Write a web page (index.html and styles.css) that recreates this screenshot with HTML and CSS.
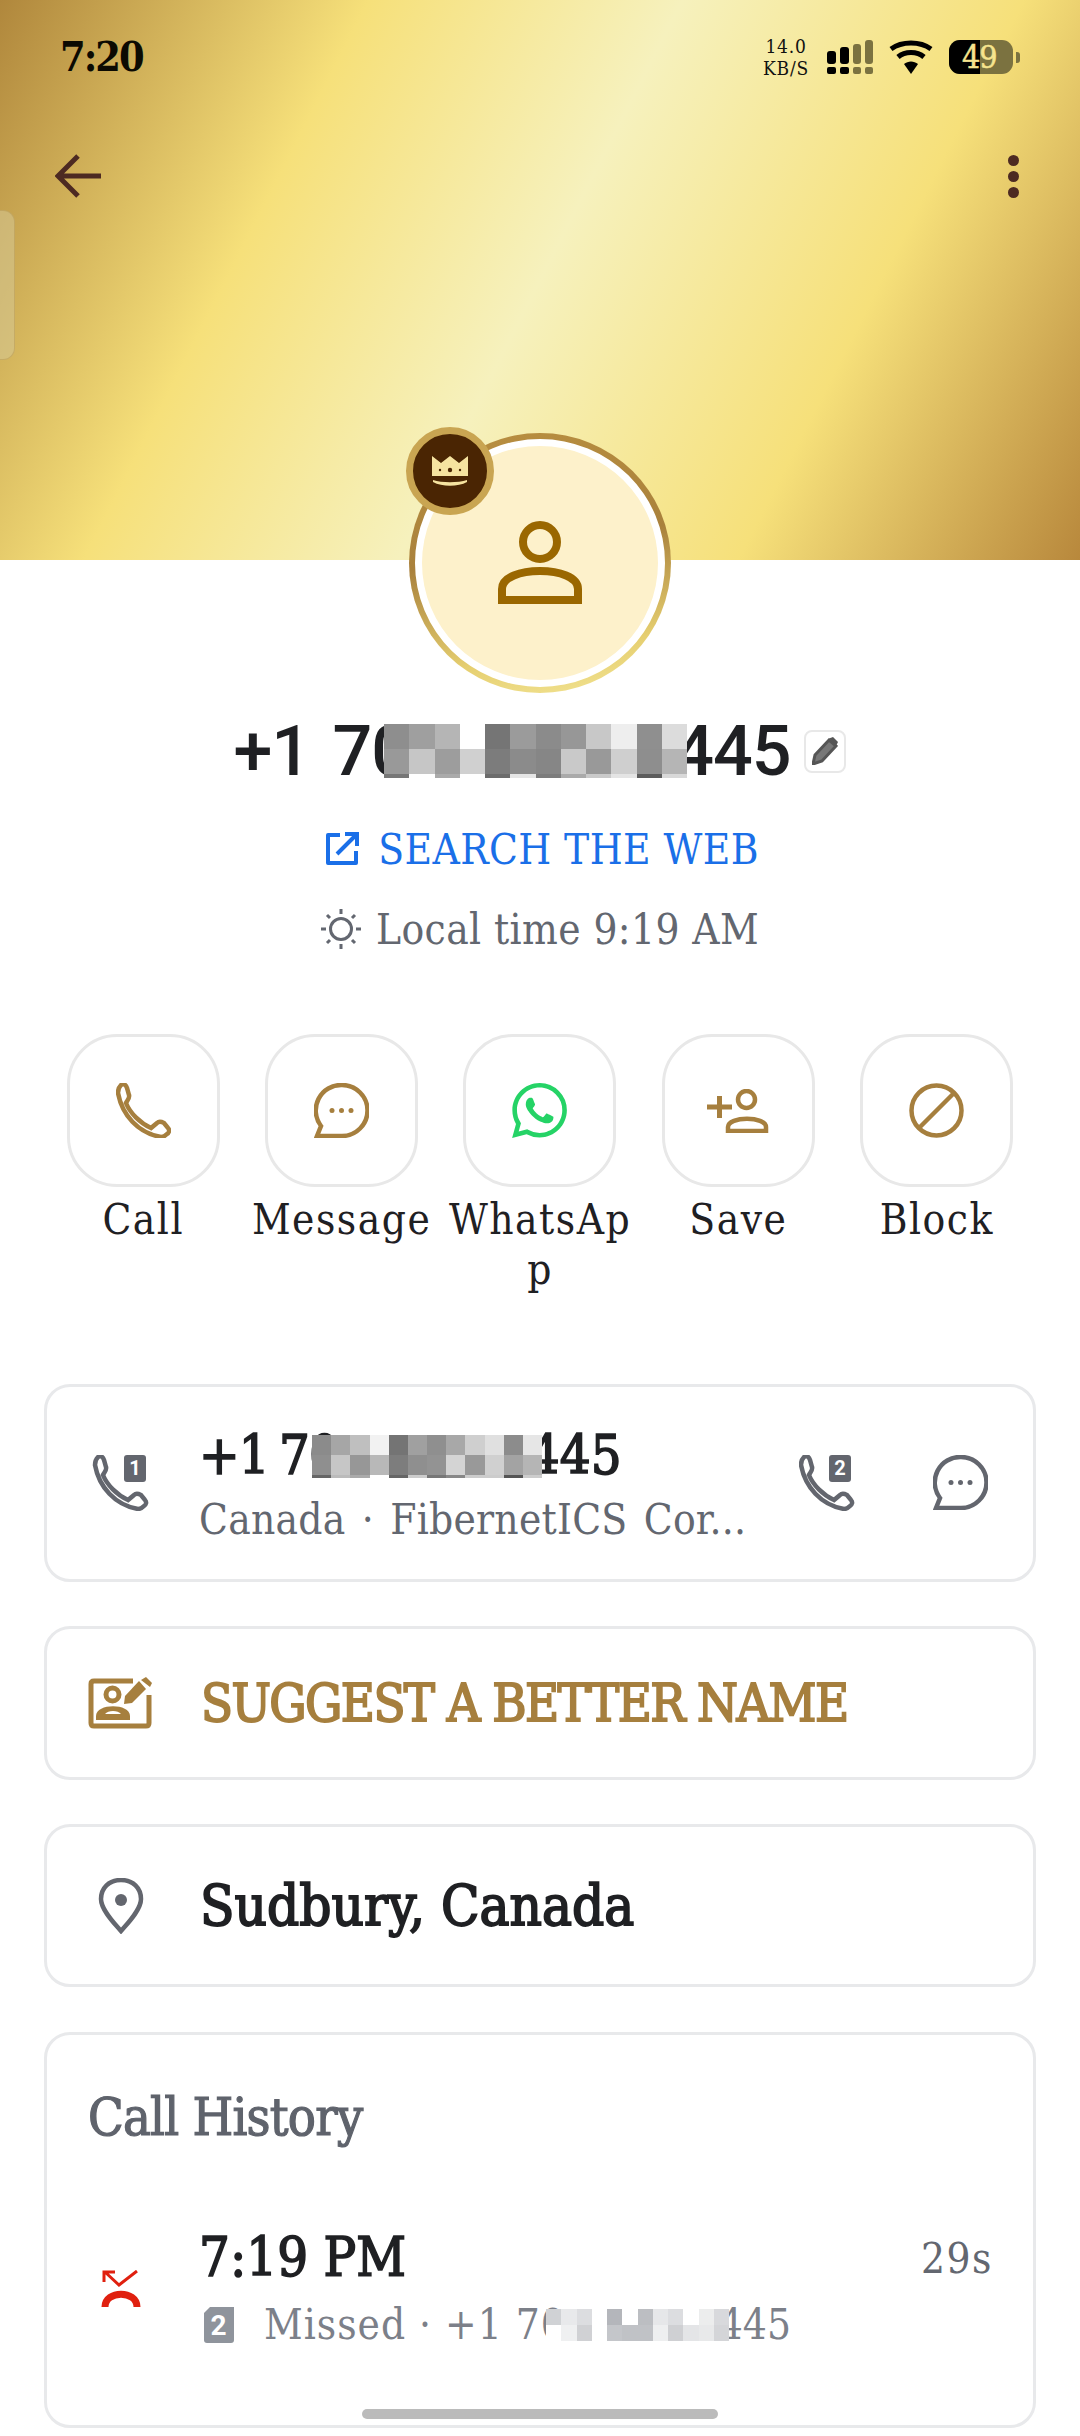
FILE: index.html
```html
<!DOCTYPE html>
<html lang="en">
<head>
    <meta charset="UTF-8">
    <title>Caller</title>
    <link rel="stylesheet" href="styles.css">
</head>
<body>
<div class="page">
    <div class="hero">
        <div class="side-tab"></div>
        <div class="status">
            <span class="clock">7:20</span>
            <div class="status-right">
                <div class="speed">14.0<br>KB/S</div>
                <svg class="sig" width="46" height="34" viewBox="0 0 46 34"><g fill="#000"><rect x="0" y="11" width="9" height="13" rx="3"/><rect x="0" y="27" width="9" height="7" rx="2"/><rect x="13" y="7" width="9" height="17" rx="3"/><rect x="13" y="27" width="9" height="7" rx="2"/></g><g fill="#7b7240"><rect x="26" y="4" width="8" height="20" rx="3"/><rect x="26" y="27" width="8" height="7" rx="2"/><rect x="38" y="0" width="8" height="24" rx="3"/><rect x="38" y="27" width="8" height="7" rx="2"/></g></svg>
                <svg class="wifi" width="44" height="34" viewBox="0 0 44 34"><g fill="none" stroke="#000" stroke-width="5"><path d="M2 9C13 1 31 1 42 9"/><path d="M9 17C16 11 28 11 35 17"/></g><path d="M15 24C19 20.500 25 20.500 29 24L22 34Z" fill="#000"/></svg>
                <div class="batt"><div class="batt-fill"></div><span class="batt-num">49</span><i class="batt-nub"></i></div>
            </div>
        </div>
        <div class="toolbar">
            <svg width="46" height="44" viewBox="0 0 46 44"><path d="M46 22H5M23 2L3 22L23 42" fill="none" stroke="#4d2a22" stroke-width="5"/></svg>
            <div class="dots"><i></i><i></i><i></i></div>
        </div>
    </div>

    <div class="profile">
        <div class="avatar">
            <div class="avatar-in">
                <svg width="84" height="84" viewBox="0 0 84 84"><g fill="none" stroke="#9a6700" stroke-width="8"><circle cx="42" cy="21" r="17"/><path d="M4 79V68C4 44 80 44 80 68V79Z"/></g></svg>
            </div>
            <div class="crown">
                <svg width="36" height="30" viewBox="0 0 36 30"><path d="M0 0L9 7L18 0L27 7L36 0V20H0Z" fill="#f6e3a0"/><path d="M1 24C10 27 26 27 35 24V26C26 31 10 31 1 26Z" fill="#f6e3a0"/><g fill="#4a2503"><circle cx="18" cy="14" r="2.200"/><circle cx="8" cy="14" r="1.200"/><circle cx="28" cy="14" r="1.200"/></g></svg>
            </div>
        </div>

        <div class="name-row">
            <span class="name">+1 70</span>
            <svg class="mosaic mosaic-big" viewBox="0 0 12 2.150" preserveAspectRatio="none" shape-rendering="crispEdges">
                <rect width="1" height="1" x="0" fill="#8e8e8e"/><rect width="1" height="1" x="1" fill="#9f9f9f"/><rect width="1" height="1" x="2" fill="#b5b5b5"/><rect width="1" height="1" x="3" fill="#fff"/><rect width="1" height="1" x="4" fill="#757575"/><rect width="1" height="1" x="5" fill="#9b9b9b"/><rect width="1" height="1" x="6" fill="#8b8b8b"/><rect width="1" height="1" x="7" fill="#979797"/><rect width="1" height="1" x="8" fill="#c8c8c8"/><rect width="1" height="1" x="9" fill="#eee"/><rect width="1" height="1" x="10" fill="#8f8f8f"/><rect width="1" height="1" x="11" fill="#dcdcdc"/>
                <rect width="1" height="1" y="1" x="0" fill="#999"/><rect width="1" height="1" y="1" x="1" fill="#c6c6c6"/><rect width="1" height="1" y="1" x="2" fill="#9d9d9d"/><rect width="1" height="1" y="1" x="3" fill="#d0d0d0"/><rect width="1" height="1" y="1" x="4" fill="#7c7c7c"/><rect width="1" height="1" y="1" x="5" fill="#8b8b8b"/><rect width="1" height="1" y="1" x="6" fill="#868686"/><rect width="1" height="1" y="1" x="7" fill="#c9c9c9"/><rect width="1" height="1" y="1" x="8" fill="#999"/><rect width="1" height="1" y="1" x="9" fill="#cfcfcf"/><rect width="1" height="1" y="1" x="10" fill="#8e8e8e"/><rect width="1" height="1" y="1" x="11" fill="#b5b5b5"/>
                <rect width="1" height=".15" y="2" x="0" fill="#777"/><rect width="1" height=".15" y="2" x="1" fill="#fff"/><rect width="1" height=".15" y="2" x="2" fill="#aaa"/><rect width="1" height=".15" y="2" x="3" fill="#fff"/><rect width="1" height=".15" y="2" x="4" fill="#6c6c6c"/><rect width="1" height=".15" y="2" x="5" fill="#e5e5e5"/><rect width="1" height=".15" y="2" x="6" fill="#7c7c7c"/><rect width="1" height=".15" y="2" x="7" fill="#aaa"/><rect width="1" height=".15" y="2" x="8" fill="#c9c9c9"/><rect width="1" height=".15" y="2" x="9" fill="#e4e4e4"/><rect width="1" height=".15" y="2" x="10" fill="#5c5c5c"/><rect width="1" height=".15" y="2" x="11" fill="#d8d8d8"/>
            </svg>
            <span class="name name-end">445</span>
            <div class="edit">
                <svg width="26" height="28" viewBox="0 0 26 28"><path d="M1 27L3 18L17 3L24 9L10 24Z" fill="#777" stroke="#555" stroke-width="3"/><path d="M17 1.500L21 0L26 5L24 9Z" fill="#555"/></svg>
            </div>
        </div>

        <div class="web-row">
            <svg width="34" height="34" viewBox="0 0 34 34"><path d="M15 3H3V31H31V19" fill="none" stroke="#1a6fe8" stroke-width="4" stroke-linejoin="round"/><path d="M12 22L31 3M20 2H32V14" fill="none" stroke="#1a6fe8" stroke-width="4"/></svg>
            <span>SEARCH THE WEB</span>
        </div>
        <div class="local-row">
            <svg width="40" height="40" viewBox="0 0 40 40"><circle cx="20" cy="20" r="10.500" fill="none" stroke="#636770" stroke-width="3"/><path d="M20 0V5M20 35V40M0 20H5M35 20H40M6 6L9 9M31 31L34 34M6 34L9 31M31 9L34 6" stroke="#636770" stroke-width="3"/></svg>
            <span>Local time 9:19 AM</span>
        </div>
    </div>

    <div class="actions">
        <div class="action">
            <div class="action-btn">
                <svg width="55" height="55" viewBox="0 0 55 55"><path class="gold-line" d="M5 2C8 0 10 2 11 5L13 12C14 15 11 18 10 20C14 30 24 40 35 45L41 40C43 38 46 39 48 40L52 45C54 47 53 50 51 51C49 53 47 54 45 54C22 50 6 32 2 10C2 6 3 4 5 2Z"/></svg>
            </div>
            <span>Call</span>
        </div>
        <div class="action">
            <div class="action-btn">
                <svg width="55" height="55" viewBox="0 0 55 55"><path class="gold-line" d="M28 2A25.500 25.500 0 1 1 28 53H3L7 43A25.500 25.500 0 0 1 28 2Z"/><g fill="#a67f3e"><circle cx="18" cy="27.500" r="2.500"/><circle cx="27.500" cy="27.500" r="2.500"/><circle cx="37" cy="27.500" r="2.500"/></g></svg>
            </div>
            <span>Message</span>
        </div>
        <div class="action">
            <div class="action-btn">
                <svg width="55" height="55" viewBox="0 0 24 24"><path fill="#25d366" d="M17.472 14.382c-.297-.149-1.758-.867-2.03-.967-.273-.099-.471-.148-.67.15-.197.297-.767.966-.94 1.164-.173.199-.347.223-.644.075-.297-.15-1.255-.463-2.39-1.475-.883-.788-1.48-1.761-1.653-2.059-.173-.297-.018-.458.13-.606.134-.133.298-.347.446-.52.149-.174.198-.298.298-.497.099-.198.05-.371-.025-.52-.075-.149-.669-1.612-.916-2.207-.242-.579-.487-.5-.669-.51-.173-.008-.371-.01-.57-.01-.198 0-.52.074-.792.372-.272.297-1.04 1.016-1.04 2.479 0 1.462 1.065 2.875 1.213 3.074.149.198 2.096 3.2 5.077 4.487.709.306 1.262.489 1.694.625.712.227 1.36.195 1.871.118.571-.085 1.758-.719 2.006-1.413.248-.694.248-1.289.173-1.413-.074-.124-.272-.198-.57-.347m-5.421 7.403h-.004a9.87 9.87 0 01-5.031-1.378l-.361-.214-3.741.982.998-3.648-.235-.374a9.86 9.86 0 01-1.51-5.26c.001-5.45 4.436-9.884 9.888-9.884 2.64 0 5.122 1.03 6.988 2.898a9.825 9.825 0 012.893 6.994c-.003 5.45-4.437 9.884-9.885 9.884m8.413-18.297A11.815 11.815 0 0012.05 0C5.495 0 .16 5.335.157 11.892c0 2.096.547 4.142 1.588 5.945L.057 24l6.305-1.654a11.882 11.882 0 005.683 1.448h.005c6.554 0 11.89-5.335 11.893-11.893a11.821 11.821 0 00-3.48-8.413Z"/></svg>
            </div>
            <span>WhatsAp<br>p</span>
        </div>
        <div class="action">
            <div class="action-btn">
                <svg width="62" height="44" viewBox="0 0 62 44"><path d="M0 18H25M12.500 7V29" stroke="#a67f3e" stroke-width="5"/><circle cx="39.500" cy="10.500" r="8.500" class="gold-line"/><path class="gold-line" d="M21 42V38C21 27 59 27 59 38V42Z"/></svg>
            </div>
            <span>Save</span>
        </div>
        <div class="action">
            <div class="action-btn">
                <svg width="55" height="55" viewBox="0 0 55 55"><circle cx="27.500" cy="27.500" r="25" class="gold-line"/><path d="M10 45L45 10" class="gold-line"/></svg>
            </div>
            <span>Block</span>
        </div>
    </div>

    <div class="card card-number">
        <svg class="card-icon row-icon" width="60" height="56" viewBox="-2 0 60 56"><path class="grey-line" d="M5 2C8 0 10 2 11 5L13 12C14 15 11 18 10 20C14 30 24 40 35 45L41 40C43 38 46 39 48 40L52 45C54 47 53 50 51 51C49 53 47 54 45 54C22 50 6 32 2 10C2 6 3 4 5 2Z"/><rect x="31" y="0" width="22" height="27" rx="3" fill="#63666e"/><text x="42" y="20" class="sim-num">1</text></svg>
        <div class="card-text card-text-shift">
            <div class="num-line">
                <span class="title num-start">+1 70</span>
                <svg class="mosaic mosaic-mid" viewBox="0 0 12 2.150" preserveAspectRatio="none" shape-rendering="crispEdges">
                    <rect width="1" height="1" x="0" fill="#8b8b8b"/><rect width="1" height="1" x="1" fill="#a6a6a6"/><rect width="1" height="1" x="2" fill="#bfbfbf"/><rect width="1" height="1" x="3" fill="#f2f2f2"/><rect width="1" height="1" x="4" fill="#747474"/><rect width="1" height="1" x="5" fill="#a0a0a0"/><rect width="1" height="1" x="6" fill="#8f8f8f"/><rect width="1" height="1" x="7" fill="#a8a8a8"/><rect width="1" height="1" x="8" fill="#cfcfcf"/><rect width="1" height="1" x="9" fill="#e0e0e0"/><rect width="1" height="1" x="10" fill="#8c8c8c"/><rect width="1" height="1" x="11" fill="#e6e6e6"/>
                    <rect width="1" height="1" y="1" x="0" fill="#8f8f8f"/><rect width="1" height="1" y="1" x="1" fill="#c6c6c6"/><rect width="1" height="1" y="1" x="2" fill="#979797"/><rect width="1" height="1" y="1" x="3" fill="#b8b8b8"/><rect width="1" height="1" y="1" x="4" fill="#7d7d7d"/><rect width="1" height="1" y="1" x="5" fill="#8f8f8f"/><rect width="1" height="1" y="1" x="6" fill="#939393"/><rect width="1" height="1" y="1" x="7" fill="#d4d4d4"/><rect width="1" height="1" y="1" x="8" fill="#999"/><rect width="1" height="1" y="1" x="9" fill="#d0d0d0"/><rect width="1" height="1" y="1" x="10" fill="#a3a3a3"/><rect width="1" height="1" y="1" x="11" fill="#b5b5b5"/>
                    <rect width="1" height=".15" y="2" x="0" fill="#666"/><rect width="1" height=".15" y="2" x="1" fill="#bbb"/><rect width="1" height=".15" y="2" x="2" fill="#aaa"/><rect width="1" height=".15" y="2" x="3" fill="#fff"/><rect width="1" height=".15" y="2" x="4" fill="#666"/><rect width="1" height=".15" y="2" x="5" fill="#ccc"/><rect width="1" height=".15" y="2" x="6" fill="#777"/><rect width="1" height=".15" y="2" x="7" fill="#888"/><rect width="1" height=".15" y="2" x="8" fill="#ccc"/><rect width="1" height=".15" y="2" x="9" fill="#ccc"/><rect width="1" height=".15" y="2" x="10" fill="#555"/><rect width="1" height=".15" y="2" x="11" fill="#ccc"/>
                </svg>
                <span class="title num-end">445</span>
            </div>
            <div class="sub">Canada · FibernetICS Cor...</div>
        </div>
        <div class="card-end">
            <svg width="56" height="56" viewBox="0 0 56 56"><path class="grey-line" d="M5 2C8 0 10 2 11 5L13 12C14 15 11 18 10 20C14 30 24 40 35 45L41 40C43 38 46 39 48 40L52 45C54 47 53 50 51 51C49 53 47 54 45 54C22 50 6 32 2 10C2 6 3 4 5 2Z"/><rect x="30" y="0" width="22" height="27" rx="3" fill="#63666e"/><text x="41" y="20" class="sim-num">2</text></svg>
            <svg width="55" height="55" viewBox="0 0 55 55"><path class="grey-line" d="M28 2A25.500 25.500 0 1 1 28 53H3L7 43A25.500 25.500 0 0 1 28 2Z"/><g fill="#63666e"><circle cx="18" cy="27.500" r="2.500"/><circle cx="27.500" cy="27.500" r="2.500"/><circle cx="37" cy="27.500" r="2.500"/></g></svg>
        </div>
    </div>

    <div class="card card-suggest">
        <svg class="suggest-icon" width="65" height="52" viewBox="0 0 65 52"><path d="M45 4H6Q3 4 3 7V46Q3 49 6 49H58Q61 49 61 46V18" fill="none" stroke="#a67f3e" stroke-width="5"/><path d="M36 27L37 19L51 4L58 12L44 26Z" fill="#a67f3e"/><path d="M53 3L58 0L64 6L62 10Z" fill="#a67f3e"/><circle cx="24.500" cy="17.500" r="6.500" fill="none" stroke="#a67f3e" stroke-width="5"/><path d="M8 43V39C8 26 42 26 42 39V43Z" fill="#a67f3e"/><path d="M17 37C20 33 30 33 33 37Z" fill="#fff"/></svg>
        <span class="suggest">SUGGEST A BETTER NAME</span>
    </div>

    <div class="card card-place">
        <svg class="card-icon" width="60" height="56" viewBox="0 0 60 56"><path d="M30 2C18 2 10 10 10 21C10 32 24 46 30 53C36 46 50 32 50 21C50 10 42 2 30 2Z" fill="none" stroke="#63666e" stroke-width="4.500"/><circle cx="30" cy="22" r="6" fill="#63666e"/></svg>
        <span class="place">Sudbury, Canada</span>
    </div>

    <div class="card card-history">
        <div class="hist-title">Call History</div>
        <div class="hist-row">
            <svg class="card-icon row-icon" width="60" height="38" viewBox="0 0 60 38"><path d="M46 1L28 15L14 2M13 12V2H24" fill="none" stroke="#e0200f" stroke-width="3"/><path d="M14 37C14 20 46 20 46 37" fill="none" stroke="#e0200f" stroke-width="7"/></svg>
            <div class="card-text">
                <div class="hist-line">
                    <span class="title">7:19 PM</span>
                    <span class="dur">29s</span>
                </div>
                <div class="hist-sub">
                    <svg width="30" height="36" viewBox="0 0 30 36"><path d="M6 0H30V33C30 35 29 36 27 36H3C1 36 0 35 0 33V6Z" fill="#8f949c"/><text x="15" y="28" class="sim-small">2</text></svg>
                    <span class="missed">Missed · +1 70</span>
                    <svg class="mosaic mosaic-low" viewBox="0 0 12 2" preserveAspectRatio="none" shape-rendering="crispEdges">
                        <rect width="1" height="1" x="0" fill="#d0d2d5"/><rect width="1" height="1" x="1" fill="#e8e9eb"/><rect width="1" height="1" x="2" fill="#dcdde0"/><rect width="1" height="1" x="3" fill="#fff"/><rect width="1" height="1" x="4" fill="#b4b6bb"/><rect width="1" height="1" x="5" fill="#fff"/><rect width="1" height="1" x="6" fill="#bcbec2"/><rect width="1" height="1" x="7" fill="#e6e7e9"/><rect width="1" height="1" x="8" fill="#dcdde0"/><rect width="1" height="1" x="9" fill="#fff"/><rect width="1" height="1" x="10" fill="#eceded"/><rect width="1" height="1" x="11" fill="#d8d9dc"/>
                        <rect width="1" height="1" y="1" x="0" fill="#fff"/><rect width="1" height="1" y="1" x="1" fill="#eff0f1"/><rect width="1" height="1" y="1" x="2" fill="#d0d1d4"/><rect width="1" height="1" y="1" x="3" fill="#fff"/><rect width="1" height="1" y="1" x="4" fill="#c4c6ca"/><rect width="1" height="1" y="1" x="5" fill="#c0c2c6"/><rect width="1" height="1" y="1" x="6" fill="#c0c2c6"/><rect width="1" height="1" y="1" x="7" fill="#eeeff0"/><rect width="1" height="1" y="1" x="8" fill="#cfd0d3"/><rect width="1" height="1" y="1" x="9" fill="#e4e5e7"/><rect width="1" height="1" y="1" x="10" fill="#e8e9ea"/><rect width="1" height="1" y="1" x="11" fill="#d4d5d8"/>
                    </svg>
                    <span class="missed missed-end">445</span>
                </div>
            </div>
        </div>
    </div>

    <div class="home-bar"></div>
</div>
</body>
</html>
```
FILE: styles.css
```css
* {
    margin: 0;
    padding: 0;
    box-sizing: border-box;
}
body {
    background: #fff;
    font-family: "DejaVu Serif Condensed", "DejaVu Serif", "Liberation Serif", serif;
    color: #1f2023;
}
.page {
    width: 1080px;
    height: 2436px;
    position: relative;
    overflow: hidden;
}
svg {
    display: block;
    flex: none;
}
.gold-line {
    fill: none;
    stroke: #a67f3e;
    stroke-width: 4.5;
}
.grey-line {
    fill: none;
    stroke: #63666e;
    stroke-width: 4.5;
}

/* gold header */
.hero {
    height: 560px;
    padding-top: 20px;
    position: relative;
    background: linear-gradient(117deg, #b0873c 0%, #f6e07a 27%, #f6f1bd 50%, #f6e07a 75%, #b8883c 100%);
}
.side-tab {
    position: absolute;
    left: 0;
    top: 210px;
    width: 15px;
    height: 150px;
    border-radius: 0 12px 12px 0;
    background: rgba(214, 200, 150, .55);
    border: 1px solid rgba(170, 135, 60, .35);
    border-left: 0;
}
.status {
    height: 74px;
    padding: 0 67px 0 60px;
    display: flex;
    justify-content: space-between;
    align-items: center;
}
.clock {
    font-size: 41px;
    font-weight: 700;
    color: #0c0a02;
    letter-spacing: -2px;
}
.status-right {
    display: flex;
    align-items: center;
}
.speed {
    width: 48px;
    text-align: center;
    font-size: 19px;
    line-height: 22.2px;
    letter-spacing: .8px;
    color: #111;
}
.sig {
    margin-left: 17px;
}
.wifi {
    margin-left: 16px;
}
.batt {
    width: 64px;
    height: 34px;
    margin-left: 16px;
    position: relative;
    border-radius: 11px;
    background: #7b7240;
}
.batt-fill {
    width: 31px;
    height: 34px;
    background: #000;
    border-radius: 11px 0 0 11px;
}
.batt-num {
    position: absolute;
    left: 13px;
    top: 0;
    line-height: 34px;
    font-size: 32px;
    color: #f6e48e;
    letter-spacing: -1px;
    -webkit-text-stroke: .5px #f6e48e;
}
.batt-nub {
    position: absolute;
    right: -7px;
    top: 12px;
    width: 4px;
    height: 11px;
    border-radius: 0 3px 3px 0;
    background: #7b7240;
}
.toolbar {
    height: 60px;
    margin-top: 52px;
    padding: 0 61px 0 55px;
    display: flex;
    justify-content: space-between;
    align-items: center;
}
.dots {
    display: flex;
    flex-direction: column;
    gap: 5px;
}
.dots i {
    width: 11px;
    height: 11px;
    border-radius: 50%;
    background: #4d2a22;
}

/* avatar and name */
.profile {
    margin-top: -127px;
    display: flex;
    flex-direction: column;
    align-items: center;
    position: relative;
}
.avatar {
    width: 262px;
    height: 260px;
    padding: 6px;
    position: relative;
    border-radius: 50%;
    background: linear-gradient(170deg, #b98f40 0%, #a9813c 45%, #e6cf70 80%, #f3e596 100%);
}
.avatar-in {
    width: 100%;
    height: 100%;
    display: flex;
    align-items: center;
    justify-content: center;
    border-radius: 50%;
    background: #fdf1cb;
    border: 7px solid #fff;
}
.crown {
    position: absolute;
    left: -3px;
    top: -6px;
    width: 88px;
    height: 88px;
    display: flex;
    align-items: center;
    justify-content: center;
    border-radius: 50%;
    background: #4a2503;
    border: 7px solid #c9a552;
}
.name-row {
    height: 64px;
    margin-top: 26px;
    display: flex;
    align-items: center;
}
.name {
    font-family: Roboto, "Noto Sans", sans-serif;
    font-size: 70px;
    line-height: 64px;
    font-weight: 500;
    letter-spacing: -1px;
    word-spacing: 6px;
    color: #1f2023;
}
.mosaic {
    display: block;
    position: relative;
}
.mosaic-big {
    width: 303px;
    height: 54px;
    margin-left: -26px;
}
.name-end {
    margin-left: -13px;
}
.edit {
    width: 42px;
    height: 43px;
    margin-left: 14px;
    display: flex;
    align-items: center;
    justify-content: center;
    border: 2px solid #e8e8e8;
    border-radius: 8px;
}
.web-row {
    height: 50px;
    margin-top: 41px;
    margin-left: 4px;
    display: flex;
    align-items: center;
    gap: 19px;
    font-size: 42px;
    color: #1a6fe8;
    letter-spacing: .4px;
}
.local-row {
    height: 50px;
    margin-top: 30px;
    display: flex;
    align-items: center;
    gap: 15px;
    font-size: 42px;
    color: #636770;
    letter-spacing: .4px;
}

/* round buttons */
.actions {
    margin-top: 80px;
    padding: 0 44px;
    display: grid;
    grid-template-columns: repeat(5, 1fr);
}
.action {
    display: flex;
    flex-direction: column;
    align-items: center;
    text-align: center;
    font-size: 42px;
    line-height: 50px;
    letter-spacing: 1.5px;
    height: 261px;
}
.action-btn {
    width: 153px;
    height: 153px;
    margin-bottom: 8px;
    display: flex;
    align-items: center;
    justify-content: center;
    border: 3px solid #e8e8e8;
    border-radius: 50px;
}

/* cards */
.card {
    margin: 0 44px;
    padding-left: 44px;
    display: flex;
    align-items: center;
    background: #fff;
    border: 3px solid #e8e9eb;
    border-radius: 26px;
}
.card-icon {
    margin-right: 49px;
}
.row-icon {
    margin-right: 48px;
}
.card-number {
    height: 198px;
    margin-top: 89px;
}
.card-suggest {
    height: 154px;
    margin-top: 44px;
    padding-left: 41px;
}
.suggest-icon {
    margin-right: 48px;
}
.card-place {
    height: 163px;
    margin-top: 44px;
}
.card-history {
    height: 396px;
    margin-top: 45px;
    display: block;
    padding: 0;
}
.card-text {
    flex: 1;
    min-width: 0;
}
.card-text-shift {
    margin-top: 6px;
}
.num-line {
    height: 60px;
    display: flex;
    align-items: center;
}
.title {
    font-size: 54px;
    line-height: 60px;
    color: #1f2023;
    -webkit-text-stroke: 1.6px #1f2023;
}
.num-start {
    letter-spacing: -1px;
    word-spacing: -4px;
}
.mosaic-mid {
    width: 230px;
    height: 43px;
    margin-left: -27px;
}
.num-end {
    margin-left: -13px;
}
.sub {
    margin-top: 8px;
    font-size: 42px;
    line-height: 52px;
    color: #636770;
    letter-spacing: .25px;
    word-spacing: 4px;
}
.card-end {
    display: flex;
    gap: 78px;
    margin-right: 45px;
}
.sim-num {
    font-family: Roboto, sans-serif;
    font-size: 20px;
    font-weight: 700;
    fill: #fff;
    text-anchor: middle;
}
.sim-small {
    font-family: Roboto, sans-serif;
    font-size: 28px;
    font-weight: 700;
    fill: #fff;
    text-anchor: middle;
}
.suggest {
    font-size: 52px;
    letter-spacing: -1.6px;
    color: #a67f3e;
    -webkit-text-stroke: 1.8px #a67f3e;
}
.place {
    font-size: 56px;
    color: #1f2023;
    -webkit-text-stroke: 1.8px #1f2023;
}
.hist-title {
    padding: 46px 0 0 41px;
    font-size: 52px;
    line-height: 72px;
    letter-spacing: -.8px;
    color: #5f636c;
    -webkit-text-stroke: 1.2px #5f636c;
}
.hist-row {
    margin-top: 75px;
    padding-left: 44px;
    display: flex;
    align-items: center;
}
.hist-line {
    display: flex;
    justify-content: space-between;
    align-items: center;
    padding-right: 40px;
}
.dur {
    font-size: 42px;
    color: #636770;
    letter-spacing: 1.5px;
}
.hist-sub {
    margin-top: 12px;
    display: flex;
    align-items: center;
    padding-left: 5px;
    font-size: 42px;
    color: #7c8089;
    letter-spacing: 1px;
}
.missed {
    margin-left: 30px;
}
.mosaic-low {
    width: 183px;
    height: 32px;
    margin-left: -20px;
}
.missed-end {
    margin-left: -10px;
    letter-spacing: 0;
}
.home-bar {
    position: absolute;
    left: 362px;
    top: 2409px;
    width: 356px;
    height: 10px;
    border-radius: 5px;
    background: #bbb;
}
```
